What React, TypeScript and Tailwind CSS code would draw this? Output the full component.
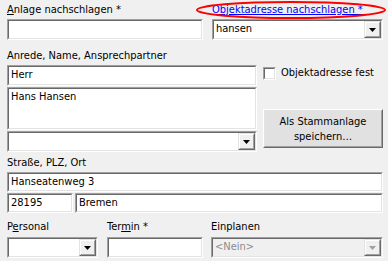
import React from "react";

// classic sunken field: two nested borders
const Sunken: React.FC<{ className?: string; disabled?: boolean; children?: React.ReactNode }> = ({
  className = "",
  disabled,
  children,
}) => (
  <div className={`border border-t-[#a0a0a0] border-l-[#a0a0a0] border-r-white border-b-white ${className}`}>
    <div
      className={`h-full border border-t-[#696969] border-l-[#696969] border-r-[#e3e3e3] border-b-[#e3e3e3] flex ${
        disabled ? "bg-[#f0f0f0]" : "bg-white"
      }`}
    >
      {children}
    </div>
  </div>
);

const DropButton: React.FC<{ disabled?: boolean }> = ({ disabled }) => (
  <div className="w-[17px] h-full border border-t-[#e3e3e3] border-l-[#e3e3e3] border-r-[#696969] border-b-[#696969] bg-[#f0f0f0]">
    <div className="h-full border border-t-white border-l-white border-r-[#a0a0a0] border-b-[#a0a0a0] flex items-center justify-center">
      <svg width="7" height="4" viewBox="0 0 7 4">
        <path d="M0 0h7L3.5 4z" fill={disabled ? "#a0a0a0" : "#000"} />
      </svg>
    </div>
  </div>
);

const TextBox: React.FC<{ value?: string; className?: string }> = ({ value, className = "h-[21px]" }) => (
  <Sunken className={className}>
    <span className="px-[2px] leading-[16px]">{value}</span>
  </Sunken>
);

const Combo: React.FC<{ value?: string; className?: string; disabled?: boolean }> = ({
  value,
  className = "",
  disabled,
}) => (
  <Sunken className={`h-[21px] ${className}`} disabled={disabled}>
    <span className={`flex-1 px-[2px] leading-[16px] ${disabled ? "text-[#8c8c8c]" : ""}`}>{value}</span>
    <DropButton disabled={disabled} />
  </Sunken>
);

export default function App() {
  return (
    <div
      className="relative w-[388px] h-[261px] bg-[#f0f0f0] text-black text-[11px] leading-[14px] pl-[7px] pr-[5px] pt-[3px] overflow-hidden whitespace-nowrap font-stretch-condensed"
      style={{ fontFamily: "'DejaVu Sans Condensed', 'DejaVu Sans', 'Liberation Sans', sans-serif" }}
    >
      {/* row 1 */}
      <div className="flex gap-[9px]">
        <div className="w-[196px] flex flex-col gap-[2px]">
          <div>
            <span className="underline">A</span>nlage nachschlagen *
          </div>
          <TextBox />
        </div>
        <div className="flex-1 flex flex-col gap-[2px]">
          <div className="text-[#0000ff] underline">Objektadresse nachschlagen *</div>
          <Combo value="hansen" />
        </div>
      </div>

      {/* row 2 */}
      <div className="mt-[9px]">Anrede, Name, Ansprechpartner</div>
      <div className="flex gap-[6px] mt-[2px]">
        <div className="w-[250px] flex flex-col gap-[1px]">
          <TextBox value="Herr" />
          <Sunken className="h-[43px]">
            <span className="px-[2px] pt-[1px]">Hans Hansen</span>
          </Sunken>
          <Combo />
        </div>
        <div className="flex-1 flex flex-col justify-between pb-[4px]">
          <label className="flex items-center gap-[5px] pt-[1px]">
            <Sunken className="w-[13px] h-[13px]" />
            <span>Objektadresse fest</span>
          </label>
          <button className="h-[39px] border border-t-white border-l-white border-r-[#696969] border-b-[#696969] bg-[#e1e1e1]">
            <div className="h-full border border-t-[#e3e3e3] border-l-[#e3e3e3] border-r-[#a0a0a0] border-b-[#a0a0a0] flex items-center justify-center text-center leading-[15px]">
              Als Stammanlage
              <br />
              speichern…
            </div>
          </button>
        </div>
      </div>

      {/* row 3 */}
      <div className="mt-[4px]">Straße, PLZ, Ort</div>
      <div className="flex flex-col gap-[1px] mt-[2px]">
        <TextBox value="Hanseatenweg 3" className="h-[20px]" />
        <div className="flex gap-[2px]">
          <TextBox value="28195" className="w-[66px] h-[20px]" />
          <TextBox value="Bremen" className="flex-1 h-[20px]" />
        </div>
      </div>

      {/* row 4 */}
      <div className="flex mt-[7px]">
        <div className="w-[100px] flex flex-col gap-[3px]">
          <div>
            P<span className="underline">e</span>rsonal
          </div>
          <Combo className="w-[91px]" />
        </div>
        <div className="w-[104px] flex flex-col gap-[3px]">
          <div>
            Ter<span className="underline">m</span>in *
          </div>
          <TextBox className="w-[96px] h-[21px]" />
        </div>
        <div className="flex-1 flex flex-col gap-[3px]">
          <div>Einplanen</div>
          <Combo value="<Nein>" disabled />
        </div>
      </div>

      {/* red marker ellipse */}
      <svg className="absolute left-[195px] top-0" width="193" height="20" viewBox="0 0 193 20">
        <ellipse cx="96" cy="10" rx="94" ry="8" fill="none" stroke="#ff0000" strokeWidth="2" />
      </svg>
    </div>
  );
}
